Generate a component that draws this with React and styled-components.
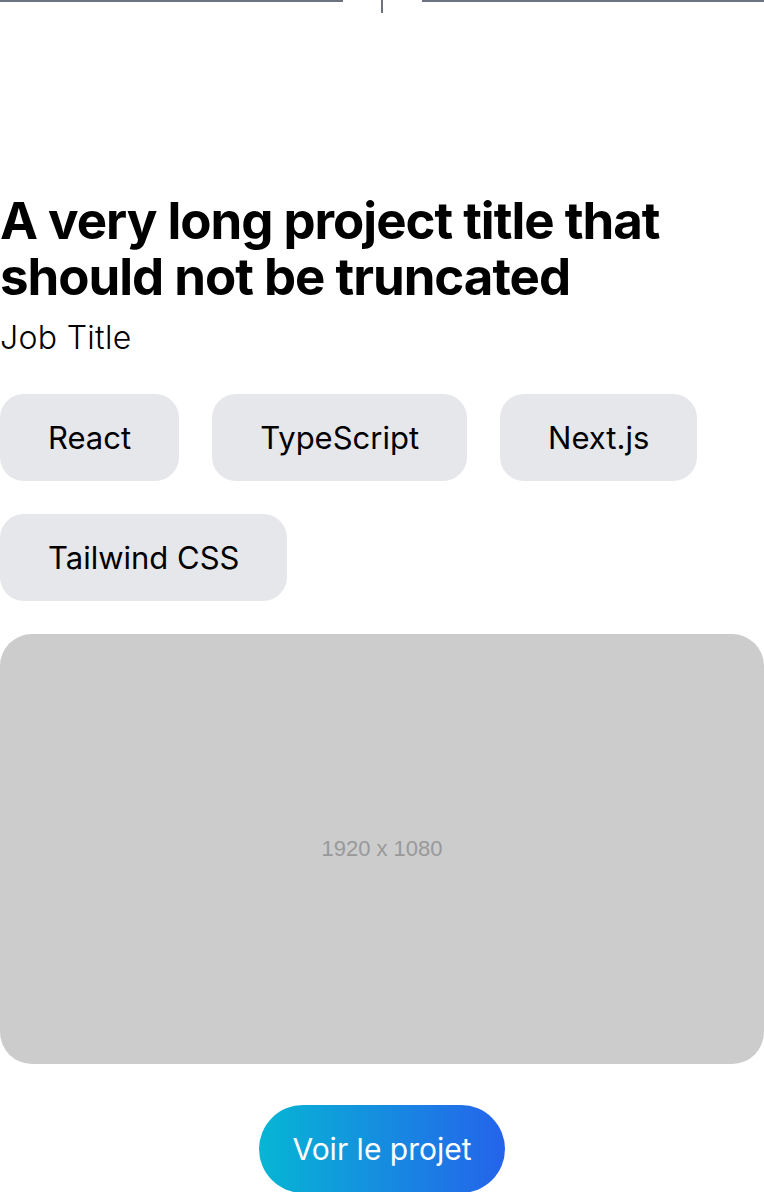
import React from "react";
import styled, { createGlobalStyle } from "styled-components";

const GlobalStyle = createGlobalStyle`
  * {
    box-sizing: border-box;
  }

  body {
    margin: 0;
    background-color: #ffffff;
    font-family: Inter, "Noto Sans", sans-serif;
    color: #000000;
  }
`;

const Page = styled.div`
  width: 764px;
  display: flex;
  flex-direction: column;
`;

const Divider = styled.div`
  display: flex;
  align-items: flex-start;
  height: 193px;
`;

const DividerLine = styled.div`
  flex: 1;
  height: 2px;
  background-color: #6b7280;
`;

const DividerGap = styled.div`
  width: 79px;
  display: flex;
  justify-content: center;

  span {
    width: 2px;
    height: 13px;
    background-color: #6b7280;
  }
`;

const Title = styled.h1`
  margin: 0;
  font-size: 51px;
  line-height: 56px;
  font-weight: 700;
  letter-spacing: -0.02em;
`;

const JobTitle = styled.p`
  margin: 10px 0 0;
  font-size: 32px;
  line-height: 45px;
  font-weight: 300;
  letter-spacing: 0.01em;
`;

const TagList = styled.ul`
  list-style: none;
  margin: 34px 0 0;
  padding: 0;
  display: flex;
  flex-wrap: wrap;
  gap: 33px;
`;

const Tag = styled.li`
  background-color: #e5e7eb;
  border-radius: 24px;
  padding: 24px 48px;
  font-size: 31px;
  line-height: 39px;
`;

const Preview = styled.div`
  margin-top: 33px;
  width: 100%;
  aspect-ratio: 16 / 9;
  border-radius: 32px;
  background-color: #cccccc;
  color: #999999;
  display: flex;
  align-items: center;
  justify-content: center;
  font-family: "Liberation Sans", Arial, sans-serif;
  font-size: 22px;
`;

const ProjectButton = styled.a`
  align-self: center;
  margin-top: 41px;
  padding: 24px 33px;
  border-radius: 9999px;
  background: linear-gradient(to right, #06b6d4, #2563eb);
  color: #ffffff;
  font-size: 30px;
  line-height: 40px;
  text-decoration: none;
  cursor: pointer;
`;

const tags = ["React", "TypeScript", "Next.js", "Tailwind CSS"];

const App = () => {
  return (
    <>
      <GlobalStyle />
      <Page>
        <Divider>
          <DividerLine />
          <DividerGap>
            <span />
          </DividerGap>
          <DividerLine />
        </Divider>
        <Title>A very long project title that should not be truncated</Title>
        <JobTitle>Job Title</JobTitle>
        <TagList>
          {tags.map((tag) => (
            <Tag key={tag}>{tag}</Tag>
          ))}
        </TagList>
        <Preview>1920 x 1080</Preview>
        <ProjectButton>Voir le projet</ProjectButton>
      </Page>
    </>
  );
};

export default App;
